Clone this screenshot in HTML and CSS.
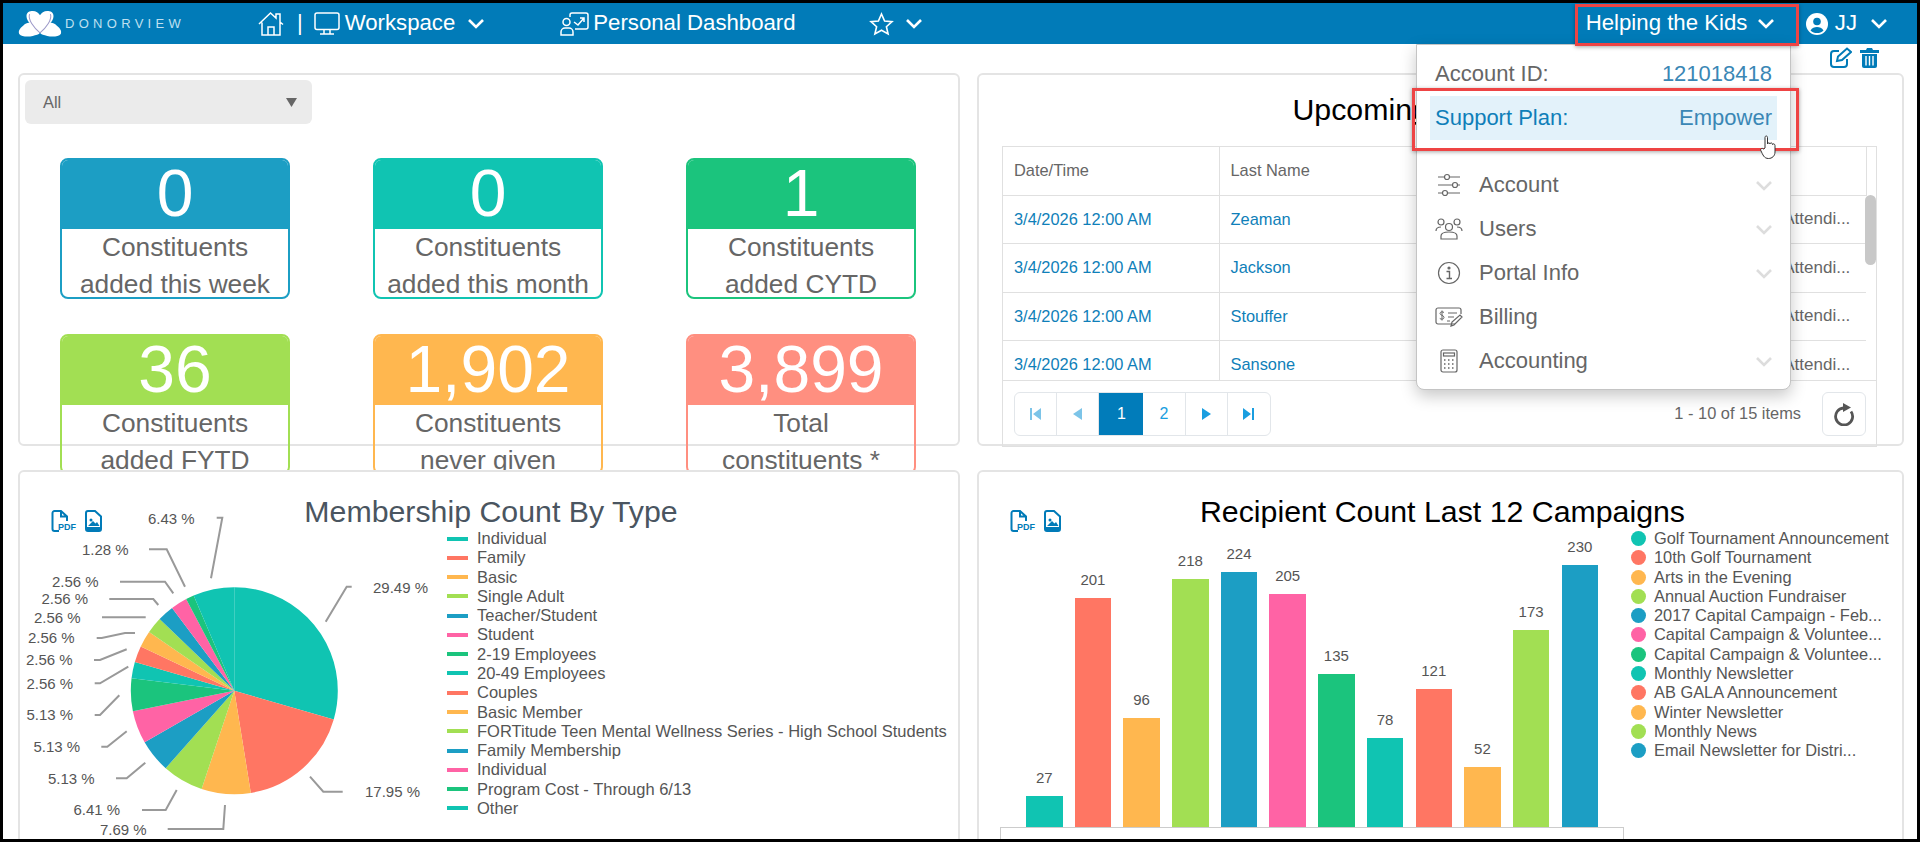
FILE: index.html
```html
<!DOCTYPE html>
<html lang="en">
<head>
<meta charset="utf-8">
<title>DonorView Dashboard</title>
<link rel="stylesheet" href="styles.css">
</head>
<body>
<svg class="defs" width="0" height="0" aria-hidden="true">
  <symbol id="chev" viewBox="0 0 18 11"><path d="M2 2 L9 9 L16 2" fill="none" stroke="currentColor" stroke-width="2.6"/></symbol>
  <symbol id="pdf" viewBox="0 0 24 22"><path d="M8 21H3.500A2 2 0 0 1 1.500 19V3A2 2 0 0 1 3.500 1H10L16 6.500V11M10 1V6.500H16" fill="none" stroke="currentColor" stroke-width="2"/></symbol>
  <symbol id="img" viewBox="0 0 17 22"><path d="M3 1H10L16 6.500V19A2 2 0 0 1 14 21H3A2 2 0 0 1 1 19V3A2 2 0 0 1 3 1Z" fill="none" stroke="currentColor" stroke-width="2"/><circle cx="6" cy="10" r="1.500" fill="currentColor"/><path d="M3 16 L8 11 L10.500 13.500 L12 12 L14.500 16Z M2 17H15V20H2Z" fill="currentColor"/></symbol>
</svg>
<div class="frame">
  <header class="topbar">
    <div class="brand">
      <svg class="logo" width="44" height="27" viewBox="0 0 42 26"><path d="M21 22C14 16 8 11 8 6C8 2 11 1 14 1C17 1 20 3 21 5C22 3 25 1 28 1C31 1 34 2 34 6C34 11 28 16 21 22Z" fill="#fff"/><path d="M15 15C12 11 8 12 5 15C1 18 0 21 1 23C3 26 10 26 14 25C17 24 20 24 21 22Z M27 15C30 11 34 12 37 15C41 18 42 21 41 23C39 26 32 26 28 25C25 24 22 24 21 22Z" fill="#fff"/><path d="M11 4C9 9 15 17 21 22C27 17 33 9 31 4" fill="none" stroke="#9d9ac9" stroke-width="1"/></svg>
      <span class="brand-name">DONORVIEW</span>
    </div>
    <svg class="icon-home" width="26" height="26" viewBox="0 0 26 26" fill="none" stroke="#fff" stroke-width="1.500"><path d="M1 13L12.500 2L18 7V3H22V11L25 13.500M4 11.500V24H22V11M10 24V16H16V24"/></svg>
    <span class="nav-sep">|</span>
    <svg class="icon-monitor" width="26" height="24" viewBox="0 0 26 24" fill="none" stroke="#fff" stroke-width="1.500"><rect x="1" y="1" width="24" height="16.500" rx="2"/><path d="M10 18V21.500M16 18V21.500M6 22H20"/></svg>
    <span class="nav-text nav-workspace">Workspace</span>
    <svg class="chev chev-workspace"><use href="#chev"/></svg>
    <svg class="icon-personal" width="29" height="24" viewBox="0 0 29 24" fill="none" stroke="#fff" stroke-width="1.500"><path d="M10 5V3A2 2 0 0 1 12 1H26A2 2 0 0 1 28 3V15A2 2 0 0 1 26 17H15"/><path d="M14 10L18 13L24 6M20 6H24V10"/><circle cx="6.500" cy="10" r="3.500"/><path d="M1 23V20A4 4 0 0 1 5 16H9A4 4 0 0 1 13 20V23Z"/></svg>
    <span class="nav-text nav-personal">Personal Dashboard</span>
    <svg class="icon-star" width="25" height="24" viewBox="0 0 25 24" fill="none" stroke="#fff" stroke-width="1.600"><path d="M12.500 2L15.600 9L23 9.700L17.400 14.700L19.100 22L12.500 18.200L5.900 22L7.600 14.700L2 9.700L9.400 9Z"/></svg>
    <svg class="chev chev-star"><use href="#chev"/></svg>
    <span class="nav-text nav-account">Helping the Kids</span>
    <svg class="chev chev-account"><use href="#chev"/></svg>
    <svg class="icon-user" width="22" height="22" viewBox="0 0 22 22"><circle cx="11" cy="11" r="11" fill="#fff"/><circle cx="11" cy="8.500" r="3.800" fill="#017bb8"/><path d="M4.500 17.500C6 14.500 8.500 14 11 14C13.500 14 16 14.500 17.500 17.500C15.500 19.500 13.500 20 11 20C8.500 20 6.500 19.500 4.500 17.500Z" fill="#017bb8"/></svg>
    <span class="nav-text nav-user">JJ</span>
    <svg class="chev chev-user"><use href="#chev"/></svg>
  </header>

  <div class="actions">
    <svg width="22" height="21" viewBox="0 0 22 21" fill="none" stroke="#017bb8" stroke-width="2"><path d="M9 4H4A3 3 0 0 0 1 7V17A3 3 0 0 0 4 20H14A3 3 0 0 0 17 17V12"/><path d="M7 14L8 9.500L17 1.500L21 5L12 13Z"/></svg>
    <svg width="19" height="21" viewBox="0 0 19 21"><path d="M0 3H6L7 1H12L13 3H19V6H0Z" fill="#017bb8"/><path d="M2 7H17V19A2 2 0 0 1 15 21H4A2 2 0 0 1 2 19Z" fill="#017bb8"/><path d="M6 9V18.500M9.500 9V18.500M13 9V18.500" stroke="#fff" stroke-width="1.400"/></svg>
  </div>

  <main class="board">
    <section class="panel panel-stats">
      <div class="select"><span>All</span><svg width="11" height="9" viewBox="0 0 11 9"><path d="M0 0H11L5.500 9Z" fill="#666"/></svg></div>
      <div class="stats">
        <div class="stat c-blue"><div class="stat-num">0</div><div class="stat-label">Constituents<br>added this week</div></div>
        <div class="stat c-teal"><div class="stat-num">0</div><div class="stat-label">Constituents<br>added this month</div></div>
        <div class="stat c-green"><div class="stat-num">1</div><div class="stat-label">Constituents<br>added CYTD</div></div>
        <div class="stat c-lime"><div class="stat-num">36</div><div class="stat-label">Constituents<br>added FYTD</div></div>
        <div class="stat c-orange"><div class="stat-num">1,902</div><div class="stat-label">Constituents<br>never given</div></div>
        <div class="stat c-salmon"><div class="stat-num">3,899</div><div class="stat-label">Total<br>constituents *</div></div>
      </div>
    </section>

    <section class="panel panel-table">
      <h2 class="table-title">Upcoming Registrants</h2>
      <div class="grid">
        <div class="grid-scroll">
          <table>
            <colgroup><col class="col-date"><col class="col-last"><col class="col-first"><col class="col-status"></colgroup>
            <thead><tr><th>Date/Time</th><th>Last Name</th><th>First Name</th><th>Note</th></tr></thead>
            <tbody>
              <tr><td>3/4/2026 12:00 AM</td><td>Zeaman</td><td>Alan</td><td class="muted">Not Attendi...</td></tr>
              <tr><td>3/4/2026 12:00 AM</td><td>Jackson</td><td>Mary</td><td class="muted">Not Attendi...</td></tr>
              <tr><td>3/4/2026 12:00 AM</td><td>Stouffer</td><td>Ruth</td><td class="muted">Not Attendi...</td></tr>
              <tr><td>3/4/2026 12:00 AM</td><td>Sansone</td><td>Paul</td><td class="muted">Not Attendi...</td></tr>
            </tbody>
          </table>
          <div class="thumb"></div>
        </div>
        <div class="pager-row">
          <div class="pager">
            <span class="page off"><svg width="11" height="12" viewBox="0 0 11 12"><path d="M0 0H2V12H0ZM11 0V12L3 6Z" fill="currentColor"/></svg></span>
            <span class="page off"><svg width="9" height="12" viewBox="0 0 9 12"><path d="M9 0V12L0 6Z" fill="currentColor"/></svg></span>
            <span class="page active">1</span>
            <span class="page">2</span>
            <span class="page"><svg width="9" height="12" viewBox="0 0 9 12"><path d="M0 0V12L9 6Z" fill="currentColor"/></svg></span>
            <span class="page"><svg width="11" height="12" viewBox="0 0 11 12"><path d="M0 0V12L8 6ZM9 0H11V12H9Z" fill="currentColor"/></svg></span>
          </div>
          <span class="pager-info">1 - 10 of 15 items</span>
          <span class="refresh"><svg width="22" height="24" viewBox="0 0 22 24" fill="none"><path d="M10.500 6A8.500 8.500 0 1 0 18 9.500" stroke="#555" stroke-width="2.800"/><path d="M10 1L18 5.500L10 10Z" fill="#555"/></svg></span>
        </div>
      </div>
    </section>

    <section class="panel panel-chart">
      <h2 class="chart-title">Membership Count By Type</h2>
      <div class="export export-pie">
        <span class="pdf-icon"><svg width="24" height="22"><use href="#pdf" width="24" height="22"/></svg><b>PDF</b></span>
        <svg width="17" height="22"><use href="#img" width="17" height="22"/></svg>
      </div>
      <svg class="pie" width="440" height="369" viewBox="18 470 440 369">
        <g transform="rotate(-90 234.300 690.700)" fill="none" stroke-width="103.500">
          <circle cx="234.300" cy="690.700" r="51.750" pathLength="100" stroke="#10c4b2" stroke-dasharray="29.49 100" stroke-dashoffset="0"/>
          <circle cx="234.300" cy="690.700" r="51.750" pathLength="100" stroke="#ff7663" stroke-dasharray="17.95 100" stroke-dashoffset="-29.49"/>
          <circle cx="234.300" cy="690.700" r="51.750" pathLength="100" stroke="#ffb74f" stroke-dasharray="7.69 100" stroke-dashoffset="-47.44"/>
          <circle cx="234.300" cy="690.700" r="51.750" pathLength="100" stroke="#a2df53" stroke-dasharray="6.41 100" stroke-dashoffset="-55.13"/>
          <circle cx="234.300" cy="690.700" r="51.750" pathLength="100" stroke="#1c9ec4" stroke-dasharray="5.13 100" stroke-dashoffset="-61.54"/>
          <circle cx="234.300" cy="690.700" r="51.750" pathLength="100" stroke="#ff63a5" stroke-dasharray="5.13 100" stroke-dashoffset="-66.67"/>
          <circle cx="234.300" cy="690.700" r="51.750" pathLength="100" stroke="#1bc47d" stroke-dasharray="5.13 100" stroke-dashoffset="-71.80"/>
          <circle cx="234.300" cy="690.700" r="51.750" pathLength="100" stroke="#10c4b2" stroke-dasharray="2.56 100" stroke-dashoffset="-76.93"/>
          <circle cx="234.300" cy="690.700" r="51.750" pathLength="100" stroke="#ff7663" stroke-dasharray="2.56 100" stroke-dashoffset="-79.49"/>
          <circle cx="234.300" cy="690.700" r="51.750" pathLength="100" stroke="#ffb74f" stroke-dasharray="2.56 100" stroke-dashoffset="-82.05"/>
          <circle cx="234.300" cy="690.700" r="51.750" pathLength="100" stroke="#a2df53" stroke-dasharray="2.56 100" stroke-dashoffset="-84.61"/>
          <circle cx="234.300" cy="690.700" r="51.750" pathLength="100" stroke="#1c9ec4" stroke-dasharray="2.56 100" stroke-dashoffset="-87.17"/>
          <circle cx="234.300" cy="690.700" r="51.750" pathLength="100" stroke="#ff63a5" stroke-dasharray="2.56 100" stroke-dashoffset="-89.73"/>
          <circle cx="234.300" cy="690.700" r="51.750" pathLength="100" stroke="#1bc47d" stroke-dasharray="1.28 100" stroke-dashoffset="-92.29"/>
          <circle cx="234.300" cy="690.700" r="51.750" pathLength="100" stroke="#10c4b2" stroke-dasharray="6.43 100" stroke-dashoffset="-93.57"/>
        </g>
        <g fill="none" stroke="#999" stroke-width="2">
          <polyline points="216.700,517.700 222.300,517.700 211,578.300"/>
          <polyline points="149,549.300 166.700,549.300 185,586.700"/>
          <polyline points="120,581.700 165,581.700 173.300,593.300"/>
          <polyline points="109.300,599 153.300,599 158.300,605"/>
          <polyline points="102,617.300 145.700,617.300"/>
          <polyline points="96.700,638 101.700,638 125,633 135,633"/>
          <polyline points="94,660 100,660 126.700,649.300"/>
          <polyline points="94.700,683.300 100,683.300 128.300,666.700"/>
          <polyline points="94.700,715 100,715 119.300,695.300"/>
          <polyline points="101.300,746.700 107.300,746.700 126.700,731.300"/>
          <polyline points="116,778.300 126.700,778.300 145.300,762.700"/>
          <polyline points="142,810 165.700,810 176.700,790"/>
          <polyline points="167.700,829 223.300,829 225,805"/>
          <polyline points="351.700,586.700 346.700,586.700 325.700,621.700"/>
          <polyline points="342.700,791.700 323.300,791.700 310,776.700"/>
        </g>
        <g class="pie-labels">
          <text x="148" y="524">6.43 %</text>
          <text x="82" y="555">1.28 %</text>
          <text x="52" y="587">2.56 %</text>
          <text x="41.500" y="604">2.56 %</text>
          <text x="34" y="623">2.56 %</text>
          <text x="28" y="643">2.56 %</text>
          <text x="26" y="665">2.56 %</text>
          <text x="26.500" y="689">2.56 %</text>
          <text x="26.500" y="720">5.13 %</text>
          <text x="33.500" y="752">5.13 %</text>
          <text x="48" y="784">5.13 %</text>
          <text x="73.500" y="815">6.41 %</text>
          <text x="100" y="835">7.69 %</text>
          <text x="373" y="593">29.49 %</text>
          <text x="365" y="797">17.95 %</text>
        </g>
      </svg>
      <ul class="legend legend-pie">
        <li class="c-teal">Individual</li>
        <li class="c-coral">Family</li>
        <li class="c-orange">Basic</li>
        <li class="c-lime">Single Adult</li>
        <li class="c-blue">Teacher/Student</li>
        <li class="c-pink">Student</li>
        <li class="c-green">2-19 Employees</li>
        <li class="c-teal">20-49 Employees</li>
        <li class="c-coral">Couples</li>
        <li class="c-orange">Basic Member</li>
        <li class="c-lime">FORTitude Teen Mental Wellness Series - High School Students</li>
        <li class="c-blue">Family Membership</li>
        <li class="c-pink">Individual</li>
        <li class="c-green">Program Cost - Through 6/13</li>
        <li class="c-teal">Other</li>
      </ul>
    </section>

    <section class="panel panel-chart">
      <h2 class="chart-title chart-title-dark">Recipient Count Last 12 Campaigns</h2>
      <div class="export export-bar">
        <span class="pdf-icon"><svg width="24" height="22"><use href="#pdf" width="24" height="22"/></svg><b>PDF</b></span>
        <svg width="17" height="22"><use href="#img" width="17" height="22"/></svg>
      </div>
      <div class="bar-body">
        <div class="bar-chart">
          <div class="bars">
            <div class="bar-col c-teal"><span>27</span><i style="height:31px"></i></div>
            <div class="bar-col c-coral"><span>201</span><i style="height:229px"></i></div>
            <div class="bar-col c-orange"><span>96</span><i style="height:109px"></i></div>
            <div class="bar-col c-lime"><span>218</span><i style="height:248px"></i></div>
            <div class="bar-col c-blue"><span>224</span><i style="height:255px"></i></div>
            <div class="bar-col c-pink"><span>205</span><i style="height:233px"></i></div>
            <div class="bar-col c-green"><span>135</span><i style="height:153px"></i></div>
            <div class="bar-col c-teal"><span>78</span><i style="height:89px"></i></div>
            <div class="bar-col c-coral"><span>121</span><i style="height:138px"></i></div>
            <div class="bar-col c-orange"><span>52</span><i style="height:60px"></i></div>
            <div class="bar-col c-lime"><span>173</span><i style="height:197px"></i></div>
            <div class="bar-col c-blue"><span>230</span><i style="height:262px"></i></div>
          </div>
          <div class="axis"></div>
        </div>
        <ul class="legend legend-bar">
          <li class="c-teal">Golf Tournament Announcement</li>
          <li class="c-coral">10th Golf Tournament</li>
          <li class="c-orange">Arts in the Evening</li>
          <li class="c-lime">Annual Auction Fundraiser</li>
          <li class="c-blue">2017 Capital Campaign - Feb...</li>
          <li class="c-pink">Capital Campaign &amp; Voluntee...</li>
          <li class="c-green">Capital Campaign &amp; Voluntee...</li>
          <li class="c-teal">Monthly Newsletter</li>
          <li class="c-coral">AB GALA Announcement</li>
          <li class="c-orange">Winter Newsletter</li>
          <li class="c-lime">Monthly News</li>
          <li class="c-blue">Email Newsletter for Distri...</li>
        </ul>
      </div>
    </section>
  </main>

  <div class="dropdown">
    <div class="dd-row"><span>Account ID:</span><span class="dd-value">121018418</span></div>
    <div class="dd-row dd-plan"><span>Support Plan:</span><span class="dd-value">Empower</span></div>
    <ul class="dd-menu">
      <li><svg width="28" height="24" viewBox="0 0 28 24" fill="none" stroke="#666" stroke-width="1.200"><path d="M3 4H9M15 4H25M3 12H17M23 12H25M3 20H7M13 20H25"/><circle cx="12" cy="4" r="2.500"/><circle cx="20" cy="12" r="2.500"/><circle cx="10" cy="20" r="2.500"/></svg><span>Account</span><svg class="dd-chev"><use href="#chev"/></svg></li>
      <li><svg width="28" height="24" viewBox="0 0 28 24" fill="none" stroke="#666" stroke-width="1.200"><circle cx="6" cy="5" r="3"/><circle cx="22" cy="5" r="3"/><circle cx="14" cy="10" r="3.500"/><path d="M1 14C1 11 3 10 6 10M27 14C27 11 25 10 22 10M6 22V19C6 16 9 15 14 15C19 15 22 16 22 19V22Z"/></svg><span>Users</span><svg class="dd-chev"><use href="#chev"/></svg></li>
      <li><svg width="28" height="24" viewBox="0 0 28 24" fill="none" stroke="#666" stroke-width="1.200"><circle cx="14" cy="12" r="10.500"/><path d="M11.500 10.500H14.500V17M11.500 17.500H17" stroke-width="1.400"/><circle cx="14" cy="7" r="1" fill="#666"/></svg><span>Portal Info</span><svg class="dd-chev"><use href="#chev"/></svg></li>
      <li><svg width="28" height="24" viewBox="0 0 28 24" fill="none" stroke="#666" stroke-width="1.200"><path d="M20 19H3A2 2 0 0 1 1 17V5A2 2 0 0 1 3 3H24A2 2 0 0 1 26 5V9"/><path d="M13 8H22M13 12H19M12 16H15M16 21L17 17L25 10L27 12L19 20Z"/><path d="M9 7.500C8 6.500 5 6.500 5 8.500C5 10.500 9 10 9 12.500C9 14.500 6 14.500 4.800 13.500M7 5.500V15.500" stroke-width="1"/></svg><span>Billing</span></li>
      <li><svg width="28" height="24" viewBox="0 0 28 24" fill="none" stroke="#666" stroke-width="1.200"><rect x="6" y="1" width="16" height="22" rx="2"/><rect x="8.500" y="4" width="11" height="3"/><path d="M9 11H10.500M13 11H14.500M17 11H18.500M9 15H10.500M13 15H14.500M17 15H18.500M9 19H10.500M13 19H14.500M17 19H18.500" stroke-width="1.600"/></svg><span>Accounting</span><svg class="dd-chev"><use href="#chev"/></svg></li>
    </ul>
  </div>

  <div class="callout callout-account"></div>
  <div class="callout callout-plan"></div>
  <svg class="cursor" width="16" height="24" viewBox="0 0 16 24"><path d="M5 13V2.500C5 .5 7.500 .5 7.500 2.500V9C7.500 7.500 10 7.500 10 9C10 7.500 12.500 7.500 12.500 9.500C12.500 8.500 15 8.500 15 10.500V17C15 21 12 23.500 8.500 23.500C4 23.500 3 20 .8 15.500C0 14 2 12.500 3.500 14Z" fill="#fff" stroke="#333" stroke-width="1"/></svg>
</div>
</body>
</html>
```

FILE: styles.css
```css
* { box-sizing: border-box; }
html, body { margin: 0; padding: 0; height: 100%; }
body { font-family: "Liberation Sans", Arial, sans-serif; background: #000; color: #666; overflow: hidden; }
.defs { position: absolute; }
.frame { position: relative; width: 1920px; height: 842px; border: 3px solid #000; background: #fff; overflow: hidden; }

.c-teal { --c: #10c4b2; }
.c-coral { --c: #ff7663; }
.c-orange { --c: #ffb74f; }
.c-lime { --c: #a2df53; }
.c-blue { --c: #1c9ec4; }
.c-pink { --c: #ff63a5; }
.c-green { --c: #1bc47d; }
.c-salmon { --c: #ff8f80; }

.topbar { display: flex; align-items: center; height: 41px; padding-right: 29px; background: #017bb8; color: #fff; }
.brand { display: flex; align-items: center; gap: 3px; width: 255px; padding-left: 15px; }
.logo { flex: none; }
.brand-name { font-size: 13px; letter-spacing: 4.300px; color: #bfe0f0; }
.icon-home { flex: none; }
.nav-sep { margin-left: 13px; font-size: 22px; padding-bottom: 2px; }
.icon-monitor { flex: none; margin-left: 11px; }
.nav-text { font-size: 22.200px; white-space: nowrap; padding-bottom: 2px; }
.nav-workspace { margin-left: 5px; }
.chev { flex: none; width: 18px; height: 11px; color: #fff; }
.chev-workspace { margin-left: 12px; }
.icon-personal { flex: none; margin-left: 75px; }
.nav-personal { margin-left: 4px; }
.icon-star { flex: none; margin-left: 73px; }
.chev-star { margin-left: 11px; }
.nav-account { margin-left: auto; }
.chev-account { margin-left: 9.500px; }
.icon-user { flex: none; margin-left: 31px; }
.nav-user { margin-left: 7px; }
.chev-user { margin-left: 13px; }

.actions { display: flex; justify-content: flex-end; gap: 8px; height: 29px; padding: 3px 38px 0 0; }

.board { display: grid; grid-template-columns: 942px 927px; grid-template-rows: 373px 400px; column-gap: 17px; row-gap: 24px; margin-left: 15px; }
.panel { position: relative; background: #fff; border: 2px solid #e4e4e4; border-radius: 6px; }

.panel-stats { padding: 5px; }
.select { display: flex; align-items: center; justify-content: space-between; width: 287px; height: 44px; padding: 0 15px 0 18px; background: #ebebeb; border-radius: 6px; font-size: 16.400px; color: #666; }
.stats { display: grid; grid-template-columns: repeat(3, 230px); column-gap: 83px; row-gap: 35px; margin: 34px 0 0 35px; }
.stat { height: 141px; border: 2px solid var(--c); border-radius: 8px; overflow: hidden; text-align: center; }
.stat-num { height: 71px; margin: -2px -2px 0; background: var(--c); color: #fff; font-size: 66px; line-height: 71px; }
.stat-label { font-size: 26.300px; line-height: 37px; color: #666; white-space: nowrap; }

.panel-table { padding: 0 25px 0 23px; }
.table-title { margin: 0; height: 71px; padding: 17px 0 0 4px; font-size: 30.300px; line-height: 36px; font-weight: 400; color: #000; text-align: center; white-space: nowrap; }
.grid { border: 1px solid #e0e0e0; height: 301px; }
.grid-scroll { position: relative; height: 234px; overflow: hidden; border-bottom: 1px solid #e0e0e0; }
table { width: 863px; border-collapse: collapse; table-layout: fixed; font-size: 16.400px; }
.col-date { width: 216px; }
.col-last { width: 240px; }
.col-first { width: 284px; }
.col-status { width: 123px; }
th { height: 48px; padding: 0 11px; font-weight: 400; text-align: left; color: #666; border-right: 1px solid #e0e0e0; border-bottom: 1px solid #e0e0e0; white-space: nowrap; overflow: hidden; }
td { height: 48.500px; padding: 0 11px; color: #0f7fb9; border-right: 1px solid #e0e0e0; border-bottom: 1px solid #e0e0e0; white-space: nowrap; overflow: hidden; }
td:last-child { border-right: 0; }
.muted { color: #666; padding-left: 9.500px; font-size: 17px; }
.thumb { position: absolute; top: 48px; right: 0; width: 11px; height: 70px; background: #c8c8c8; border-radius: 6px; }

.pager-row { display: flex; align-items: center; height: 65px; padding: 0 10px 0 11px; }
.pager { display: flex; height: 44px; border: 1px solid #e2e6ea; border-radius: 6px; overflow: hidden; }
.page { display: flex; align-items: center; justify-content: center; width: 42.200px; font-size: 16px; color: #1a9ee0; border-right: 1px solid #e2e6ea; }
.page:last-child { border-right: 0; }
.page.off { color: #7cc4e8; }
.page.active { background: #017cba; color: #fff; border-right: 0; width: 44px; }
.pager-info { margin-left: auto; font-size: 16.400px; color: #666; }
.refresh { display: flex; align-items: center; justify-content: center; width: 44px; height: 44px; margin-left: 21px; border: 1px solid #e2e6ea; border-radius: 6px; }

.panel-chart { overflow: hidden; }
.chart-title { margin: 0; padding: 24px 0 0 4px; height: 56px; font-size: 30.300px; line-height: 32px; font-weight: 400; text-align: center; color: #4a5560; white-space: nowrap; }
.chart-title-dark { color: #000; }
.export { position: absolute; left: 31px; top: 38px; display: flex; gap: 10px; color: #017bb8; z-index: 1; }
.pdf-icon { position: relative; display: block; width: 24px; height: 22px; }
.pdf-icon b { position: absolute; left: 7px; top: 12px; font-size: 9px; line-height: 10px; }
.pie { position: absolute; left: -2px; top: -2px; }
.pie-labels { font-size: 15px; fill: #555; }
.legend { margin: 0; padding: 0; list-style: none; font-size: 16.400px; color: #555; white-space: nowrap; }
.legend li { display: flex; align-items: center; height: 19.280px; }
.legend li::before { content: ""; flex: none; background: var(--c); }
.legend-pie { position: relative; margin: 1px 0 0 427px; font-size: 16.500px; }
.legend-pie li::before { width: 21px; height: 4px; margin-right: 9px; }
.legend-bar { margin: 1px 0 0 7px; }
.legend-bar li::before { width: 15px; height: 15px; border-radius: 50%; margin-right: 8px; }

.bar-body { display: flex; align-items: flex-start; padding-left: 21px; }
.bar-chart { flex: none; width: 624px; }
.bars { display: flex; align-items: flex-end; gap: 12.200px; height: 299px; padding-left: 26px; }
.bar-col { display: flex; flex-direction: column; align-items: center; width: 36.500px; }
.bar-col span { font-size: 15px; line-height: 18px; margin-bottom: 9px; color: #555; }
.bar-col i { display: block; width: 100%; background: var(--c); }
.axis { height: 12px; border: 1.500px solid #ccc; border-bottom: 0; }

.dropdown { position: absolute; left: 1413px; top: 41px; width: 375px; height: 346px; padding: 7px 13px 0; background: #fff; border: 1px solid #c4c4c4; border-radius: 0 0 8px 8px; box-shadow: 0 6px 16px rgba(0,0,0,.22); z-index: 5; font-size: 22px; }
.dd-row { display: flex; align-items: center; justify-content: space-between; height: 44px; padding: 0 5px; color: #666; }
.dd-value { color: #3a87b5; }
.dd-plan { background: #e3f2fa; color: #0f7fb9; }
.dd-menu { margin: 23px 0 0; padding: 0; list-style: none; }
.dd-menu li { display: flex; align-items: center; height: 44px; padding: 0 4px 0 5px; gap: 16px; color: #666; font-size: 22px; }
.dd-menu li > svg:first-child { flex: none; }
.dd-chev { margin-left: auto; width: 18px; height: 11px; color: #ddd; }

.callout { position: absolute; border: 3.500px solid #ee4444; box-shadow: 0 1px 4px rgba(0,0,0,.35); z-index: 6; }
.callout-account { left: 1572px; top: 1px; width: 224px; height: 42px; }
.callout-plan { left: 1409px; top: 85px; width: 387px; height: 63px; }
.cursor { position: absolute; left: 1757px; top: 132px; z-index: 7; }
```
